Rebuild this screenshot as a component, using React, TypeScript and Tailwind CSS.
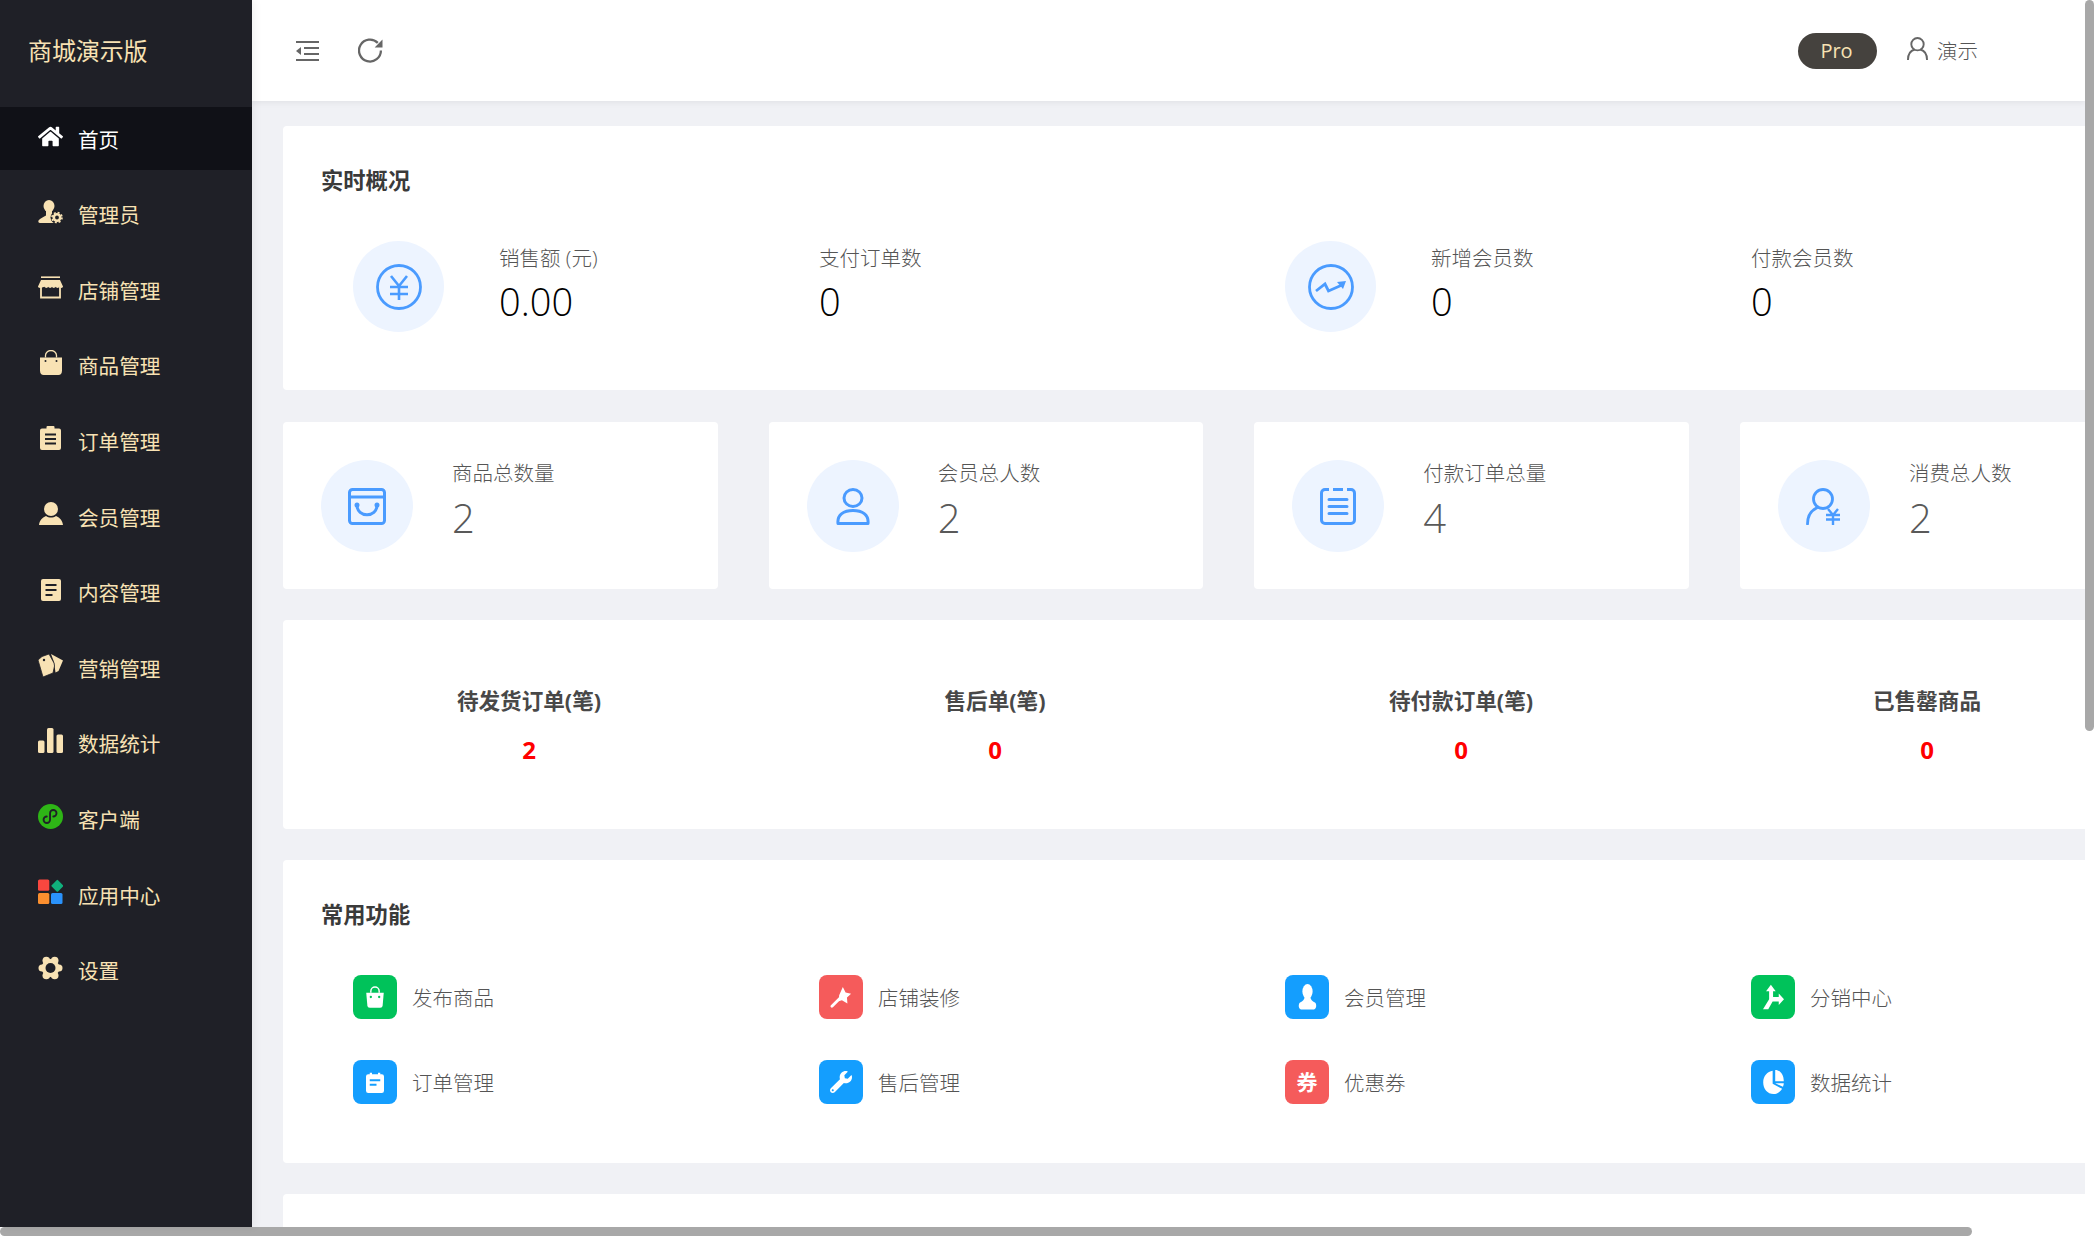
import type { ReactNode } from "react";
import { FaHome, FaWrench } from "react-icons/fa";

const cream = "#f8e2b4";
const dark = "#1f2027";
const blue = "#4a9bff";

const navIcons: Record<string, ReactNode> = {
  admin: (
    <svg viewBox="0 0 25 24" className="w-[25px] h-[24px]" fill={cream}>
      <ellipse cx="11" cy="6" rx="5.500" ry="6" />
      <path d="M8 10h6v3l3 2.500V23H2c-1.500 0-2-1-1.500-2.500C2 18 6 17 8 15.500z" />
      <circle cx="19" cy="17.500" r="6.500" fill={dark} />
      <circle cx="19" cy="17.500" r="3.200" fill="none" stroke={cream} strokeWidth="2.600" />
      <circle cx="19" cy="17.500" r="5" fill="none" stroke={cream} strokeWidth="1.600" strokeDasharray="2 1.930" />
    </svg>
  ),
  store: (
    <svg viewBox="0 0 25 23" className="w-[25px] h-[23px]">
      <path d="M3 1.200h19" stroke={cream} strokeWidth="1.600" />
      <path d="M3 4h19l3 6.500c0 1.800-3 1.800-3.500.3-.6 1.500-3.200 1.500-3.800 0-.6 1.500-3.300 1.500-3.700 0-.5 1.500-3.200 1.500-3.800 0-.5 1.500-3.200 1.500-3.700 0C3 12.300 0 12.300 0 10.500z" fill={cream} />
      <path d="M3 11v10.500h19V11" fill="none" stroke={cream} strokeWidth="1.800" />
    </svg>
  ),
  bag: (
    <svg viewBox="0 0 22 25" className="w-[22px] h-[25px]">
      <path d="M5.500 7.500V5.500a5.500 5 0 0 1 11 0v2" fill="none" stroke={cream} strokeWidth="1.300" />
      <path d="M0 7.500h22v13c0 3-1.500 4.500-3.500 4.500h-15C1.500 25 0 23.500 0 20.500z" fill={cream} />
      <circle cx="5.500" cy="11" r="1" fill={dark} />
      <circle cx="16.500" cy="11" r="1" fill={dark} />
    </svg>
  ),
  clipboard: (
    <svg viewBox="0 0 21 24" className="w-[21px] h-[24px]">
      <path d="M6.500 2.500V1a1 1 0 0 1 1-1h6a1 1 0 0 1 1 1v1.500H19a2 2 0 0 1 2 2V22a2 2 0 0 1-2 2H2a2 2 0 0 1-2-2V4.500a2 2 0 0 1 2-2z" fill={cream} />
      <path d="M5 8.500h11M5 13h11M5 17.500h11" stroke={dark} strokeWidth="1.800" />
    </svg>
  ),
  member: (
    <svg viewBox="0 0 24 23" className="w-[24px] h-[23px]" fill={cream}>
      <circle cx="12" cy="7" r="7" />
      <path d="M7 14c3 2 7 2 10 0 4 1.500 6.500 5 7 9H0c.5-4 3-7.500 7-9z" />
    </svg>
  ),
  doc: (
    <svg viewBox="0 0 20 22" className="w-[20px] h-[22px]">
      <rect width="20" height="22" rx="2" fill={cream} />
      <path d="M4.500 6h11M4.500 11h11M4.500 16h7" stroke={dark} strokeWidth="2" />
    </svg>
  ),
  tags: (
    <svg viewBox="0 0 25 23" className="w-[25px] h-[23px]" fill={cream}>
      <path d="M13 0l12 6.500-4.500 10.500-3 1.500L16 8z" />
      <path d="M0 6l4-3.500L11 0l5 9 .5 3-1.500 7-10 4z" stroke={dark} strokeWidth="0.800" strokeLinejoin="round" />
      <circle cx="6" cy="6" r="1.200" fill={dark} />
    </svg>
  ),
  bars: (
    <svg viewBox="0 0 25 25" className="w-[25px] h-[25px]" fill={cream}>
      <rect x="0" y="12.500" width="6.500" height="12.500" rx="1.500" />
      <rect x="9" y="0" width="6.500" height="25" rx="1.500" />
      <rect x="18.500" y="6.500" width="6.500" height="18.500" rx="1.500" />
    </svg>
  ),
  mini: (
    <svg viewBox="0 0 27 27" className="w-[27px] h-[27px]">
      <circle cx="13.500" cy="13.500" r="13.500" fill="#2eb516" />
      <path d="M13 10.500v6.500a3.500 3.500 0 1 1-3.500-3.500M13 16.500V10a3.500 3.500 0 1 1 3.500 3.500" fill="none" stroke={dark} strokeWidth="2" strokeLinecap="round" />
    </svg>
  ),
  apps: (
    <svg viewBox="0 0 25 25" className="w-[25px] h-[25px]">
      <rect x="0" y="0.500" width="11.300" height="11.300" rx="1.500" fill="#f9473f" />
      <rect x="15" y="2" width="9" height="9" rx="1" fill="#10b07c" transform="rotate(45 19 6.500)" />
      <rect x="0" y="14" width="11.300" height="11" rx="1.500" fill="#fb8f2f" />
      <rect x="13" y="14" width="11.500" height="11" rx="1.500" fill="#2a92fb" />
    </svg>
  ),
  gear: (
    <svg viewBox="0 0 25 24" className="w-[25px] h-[24px]" fill={cream}>
      <circle cx="12.500" cy="12" r="9" />
      <circle cx="21" cy="12" r="3.500" />
      <circle cx="4" cy="12" r="3.500" />
      <circle cx="8.300" cy="4.500" r="3.800" />
      <circle cx="16.700" cy="4.500" r="3.800" />
      <circle cx="8.300" cy="19.500" r="3.800" />
      <circle cx="16.700" cy="19.500" r="3.800" />
      <circle cx="12.500" cy="12" r="5" fill={dark} />
    </svg>
  ),
};

const navItems = [
  { label: "首页", icon: <FaHome className="w-[25px] h-[25px] text-white" />, active: true },
  { label: "管理员", icon: navIcons.admin },
  { label: "店铺管理", icon: navIcons.store },
  { label: "商品管理", icon: navIcons.bag },
  { label: "订单管理", icon: navIcons.clipboard },
  { label: "会员管理", icon: navIcons.member },
  { label: "内容管理", icon: navIcons.doc },
  { label: "营销管理", icon: navIcons.tags },
  { label: "数据统计", icon: navIcons.bars },
  { label: "客户端", icon: navIcons.mini },
  { label: "应用中心", icon: navIcons.apps },
  { label: "设置", icon: navIcons.gear },
];

const yenIcon = (
  <svg viewBox="0 0 46 46" className="w-[46px] h-[46px]" fill="none" stroke={blue} strokeWidth="2.800">
    <circle cx="23" cy="23" r="21.500" />
    <path d="M15 12l8 10 8-10M14 23h18M14 30h18M23 22v14" strokeWidth="2.600" />
  </svg>
);

const trendIcon = (
  <svg viewBox="0 0 46 46" className="w-[46px] h-[46px]" fill="none" stroke={blue} strokeWidth="2.800">
    <circle cx="23" cy="23" r="21.500" />
    <path d="M8 27l9-7 3.500 7L34 21" />
    <path d="M29 18l9-1-3 8z" fill={blue} stroke="none" />
  </svg>
);

const bagOutline = (
  <svg viewBox="0 0 38 37" className="w-[38px] h-[37px]" fill="none" stroke={blue} strokeWidth="3">
    <rect x="1.500" y="1.500" width="35" height="34" rx="3" />
    <path d="M1.500 9h35" />
    <path d="M9 17c0 13 20 13 20 0" strokeLinecap="round" />
    <circle cx="9" cy="17" r="1" fill={blue} />
    <circle cx="29" cy="17" r="1" fill={blue} />
  </svg>
);

const personOutline = (
  <svg viewBox="0 0 34 37" className="w-[34px] h-[37px]" fill="none" stroke={blue} strokeWidth="3">
    <ellipse cx="17" cy="10" rx="9" ry="8.500" />
    <path d="M2 35.500c-1-9 6-13 15-13s16 4 15 13z" strokeLinejoin="round" />
  </svg>
);

const listOutline = (
  <svg viewBox="0 0 36 37" className="w-[36px] h-[37px]" fill="none" stroke={blue} strokeWidth="3">
    <path d="M9 1.500H5a3.500 3.500 0 0 0-3.500 3.500v27A3.500 3.500 0 0 0 5 35.500h26a3.500 3.500 0 0 0 3.500-3.500V5A3.500 3.500 0 0 0 31 1.500h-4M13 1.500h10" />
    <path d="M9 11.500h18M9 18.500h18M9 25.500h18" strokeLinecap="round" />
  </svg>
);

const personYen = (
  <svg viewBox="0 0 36 37" className="w-[36px] h-[37px]" fill="none" stroke={blue} strokeWidth="2.800">
    <circle cx="17" cy="11" r="9.500" />
    <path d="M1.500 36c0-8 4-13.500 9-16" strokeLinecap="round" />
    <path d="M22 21l5 6 5-6M20 27h14M20 31.500h14M27 27v10" strokeWidth="2.400" />
  </svg>
);

const stats = [
  { label: "商品总数量", value: "2", icon: bagOutline },
  { label: "会员总人数", value: "2", icon: personOutline },
  { label: "付款订单总量", value: "4", icon: listOutline },
  { label: "消费总人数", value: "2", icon: personYen },
];

const todo = ["待发货订单(笔)", "售后单(笔)", "待付款订单(笔)", "已售罄商品"];

const quick = [
  {
    label: "发布商品",
    color: "bg-[#00c25a]",
    icon: (
      <svg viewBox="0 0 24 28" className="w-[20px] h-[24px]">
        <path d="M7 9V7a5 5 0 0 1 10 0v2" fill="none" stroke="#fff" strokeWidth="1.700" />
        <path d="M1.500 9h21l-1.300 15c-.2 2-1.200 3-3 3H5.800c-1.800 0-2.800-1-3-3z" fill="#fff" />
        <circle cx="7" cy="14" r="1.400" fill="#00c25a" />
        <circle cx="17" cy="14" r="1.400" fill="#00c25a" />
      </svg>
    ),
  },
  {
    label: "店铺装修",
    color: "bg-[#f55b5b]",
    icon: (
      <svg viewBox="0 0 24 24" className="w-[22px] h-[22px]" fill="#fff">
        <path d="M14 1l3 6 6 1.500-4.500 4 .5 6.500-6-3.500-3.500 1L10 10z" />
        <path d="M1 21l9-9 2.200 2.200-9 9c-.8.600-1.500.600-2.200 0-.6-.7-.6-1.500 0-2.200z" />
      </svg>
    ),
  },
  {
    label: "会员管理",
    color: "bg-[#149efe]",
    icon: (
      <svg viewBox="0 0 20 28" className="w-[19px] h-[26px]" fill="#fff">
        <ellipse cx="10" cy="8" rx="5.500" ry="8" />
        <path d="M7 14h6c.5 3 2 4.500 5 6 2 1 2 7-1 7.500H3c-3-.5-3-6.500-1-7.500 3-1.500 4.500-3 5-6z" />
      </svg>
    ),
  },
  {
    label: "分销中心",
    color: "bg-[#00c25a]",
    icon: (
      <svg viewBox="0 0 24 28" className="w-[21px] h-[26px]" fill="#fff">
        <path d="M9 0l5.500 7.500H11.500V14h6.500v-4l6 6.500-6 6.500v-4h-7L6 28H0l7-11.500v-9H3.500z" />
      </svg>
    ),
  },
  {
    label: "订单管理",
    color: "bg-[#149efe]",
    icon: (
      <svg viewBox="0 0 24 28" className="w-[18px] h-[21px]">
        <path d="M5 3V1h3v2h8V1h3v2h2a3 3 0 0 1 3 3v19a3 3 0 0 1-3 3H3a3 3 0 0 1-3-3V6a3 3 0 0 1 3-3z" fill="#fff" />
        <path d="M5 11h14M5 17h9" stroke="#149efe" strokeWidth="2.400" />
      </svg>
    ),
  },
  {
    label: "售后管理",
    color: "bg-[#149efe]",
    icon: <FaWrench className="w-[22px] h-[22px] text-white" />,
  },
  {
    label: "优惠券",
    color: "bg-[#f55b5b]",
    icon: <span className="text-white text-[21px] font-bold leading-none">券</span>,
  },
  {
    label: "数据统计",
    color: "bg-[#149efe]",
    icon: (
      <svg viewBox="0 0 24 28" className="w-[21px] h-[24px]" fill="#fff">
        <path d="M11 1C5 2 0 7 0 14.500S5 28 12 28c4 0 8-2.500 10-6L11 16z" />
        <path d="M14 0c5.500 0 10 5 10 13H14zM14 15.500h10c0 1.500-.5 3-1 4z" />
      </svg>
    ),
  },
];

function Stat({ label, value, icon }: { label: string; value: string; icon?: ReactNode }) {
  return (
    <div className="flex">
      {icon && (
        <div className="w-[91px] h-[91px] rounded-full bg-[#edf4ff] flex items-center justify-center mr-[55px] shrink-0">
          {icon}
        </div>
      )}
      <div>
        <div className="mt-[1px] text-[20.5px] leading-[32px] text-[#555555] font-light">{label}</div>
        <div className="-mt-[2px] text-[38px] leading-[58px] text-black font-light">{value}</div>
      </div>
    </div>
  );
}

export default function App() {
  return (
    <div className="w-[2094px] h-[1236px] flex flex-col overflow-hidden bg-white [font-family:'Open_Sans','Noto_Sans_CJK_SC',sans-serif]">
      <div className="flex h-[1227px] min-h-0">
        {/* Sidebar */}
        <aside className="relative z-20 w-[252px] shrink-0 bg-[#1f2027] shadow-[3px_0_8px_rgba(0,0,0,0.05)]">
          <div className="h-[107px] pl-[28px] pb-[5px] flex items-center text-[24px] text-[#f8e2b4] tracking-[-0.1px]">
            商城演示版
          </div>
          <nav className="flex flex-col gap-[12.6px]">
            {navItems.map((item) => (
              <div
                key={item.label}
                className={
                  item.active
                    ? "h-[63px] pl-[38px] flex items-center gap-[15px] bg-[#101117] text-white"
                    : "h-[63px] pl-[38px] flex items-center gap-[15px] text-[#f8e2b4]"
                }
              >
                <div className="w-[25px] -mt-[5px] flex justify-center shrink-0">{item.icon}</div>
                <span className="text-[20.6px] leading-none mt-[3px]">{item.label}</span>
              </div>
            ))}
          </nav>
        </aside>

        <main className="flex-1 min-w-0 flex flex-col overflow-hidden bg-[#f0f1f5]">
          {/* Top bar */}
          <header className="relative z-10 h-[101px] shrink-0 bg-white shadow-[0_2px_6px_rgba(0,0,0,0.06)] flex items-center pl-[44px]">
            <svg viewBox="0 0 23 20" className="w-[23px] h-[20px]" fill="#666666">
              <rect y="0" width="23" height="2" />
              <rect x="8" y="6" width="15" height="2" />
              <rect x="8" y="12" width="15" height="2" />
              <rect y="18" width="23" height="2" />
              <path d="M5 6v8L0 10z" />
            </svg>
            <svg viewBox="0 0 24 24" className="w-[25px] h-[25px] ml-[39px]" fill="none" stroke="#666666" strokeWidth="2.200">
              <path d="M22 12a10.500 10.500 0 1 1-3-7.300" />
              <path d="M23.500 1.500v7.500H16z" fill="#666666" stroke="none" />
            </svg>
            <div className="ml-auto mr-[107px] flex items-center">
              <div className="w-[79px] h-[36px] mr-[1px] rounded-full bg-[#45423e] text-[#f8e2b4] text-[20px] pr-[2px] flex items-center justify-center">
                Pro
              </div>
              <svg viewBox="0 0 22 24" className="w-[21px] h-[23px] ml-[29px] -mt-[4px]" fill="none" stroke="#666666" strokeWidth="2">
                <circle cx="11" cy="7.500" r="6.500" />
                <path d="M1 24c0-6.500 3-10 7-11M21 24c0-6.500-3-10-7-11" />
              </svg>
              <span className="ml-[9px] mt-[1px] text-[20.500px] text-[#555555] font-light">演示</span>
            </div>
          </header>

          {/* Content is wider than the window, clipped on the right */}
          <div className="w-[1889px] shrink-0 ml-[31px] mt-[25px] flex flex-col">
            <section className="h-[264px] bg-white rounded-[4px] pl-[38px] pt-[40px]">
              <h2 className="text-[22.3px] leading-[30px] font-bold text-[#3a3a3a]">实时概况</h2>
              <div className="mt-[45px] ml-[32px] grid grid-cols-[repeat(4,466px)]">
                <Stat label="销售额 (元)" value="0.00" icon={yenIcon} />
                <Stat label="支付订单数" value="0" />
                <Stat label="新增会员数" value="0" icon={trendIcon} />
                <Stat label="付款会员数" value="0" />
              </div>
            </section>

            <div className="mt-[32px] flex gap-[51px]">
              {stats.map((s) => (
                <div key={s.label} className="w-[434.67px] h-[167px] shrink-0 bg-white rounded-[4px] pl-[38px] pt-[38px] flex">
                  <div className="w-[92px] h-[92px] rounded-full bg-[#edf4ff] flex items-center justify-center shrink-0">
                    {s.icon}
                  </div>
                  <div className="ml-[40px] -mt-[3px] -translate-x-[1px]">
                    <div className="text-[20.5px] leading-[32px] text-[#555555] font-light">{s.label}</div>
                    <div className="-mt-[1px] text-[40px] leading-[60px] text-[#595959] font-light">{s.value}</div>
                  </div>
                </div>
              ))}
            </div>

            <section className="mt-[31px] h-[209px] bg-white rounded-[4px] pl-[13px] pt-[60px] grid grid-cols-[repeat(4,466px)]">
              {todo.map((t) => (
                <div key={t} className="text-center">
                  <div className="mt-[1px] text-[21.6px] leading-[40px] font-bold text-[#484848]">{t}</div>
                  <div className="mt-[9px] text-[24px] leading-[40px] font-bold text-[#ff0000]">
                    {t === "待发货订单(笔)" ? "2" : "0"}
                  </div>
                </div>
              ))}
            </section>

            <section className="mt-[31px] h-[303px] bg-white rounded-[4px] pl-[38px] pt-[40px]">
              <h2 className="text-[22.3px] leading-[30px] font-bold text-[#3a3a3a]">常用功能</h2>
              <div className="mt-[45px] ml-[32px] grid grid-cols-[repeat(4,466px)] gap-y-[41px]">
                {quick.map((q) => (
                  <div key={q.label + q.color} className="flex items-center">
                    <div className={`w-[44px] h-[44px] rounded-[8px] flex items-center justify-center ${q.color}`}>
                      {q.icon}
                    </div>
                    <span className="ml-[15px] mt-[3px] text-[20.5px] text-[#555555] font-light">{q.label}</span>
                  </div>
                ))}
              </div>
            </section>

            <section className="mt-[31px] h-[200px] bg-white rounded-[4px]" />
          </div>
        </main>

        {/* Vertical scrollbar */}
        <div className="w-[9px] shrink-0 bg-white">
          <div className="h-[731px] rounded-[5px] bg-[#a8a8a8]" />
        </div>
      </div>

      {/* Horizontal scrollbar */}
      <div className="h-[9px] shrink-0 bg-white">
        <div className="w-[1972px] h-full rounded-[5px] bg-[#a8a8a8]" />
      </div>
    </div>
  );
}
